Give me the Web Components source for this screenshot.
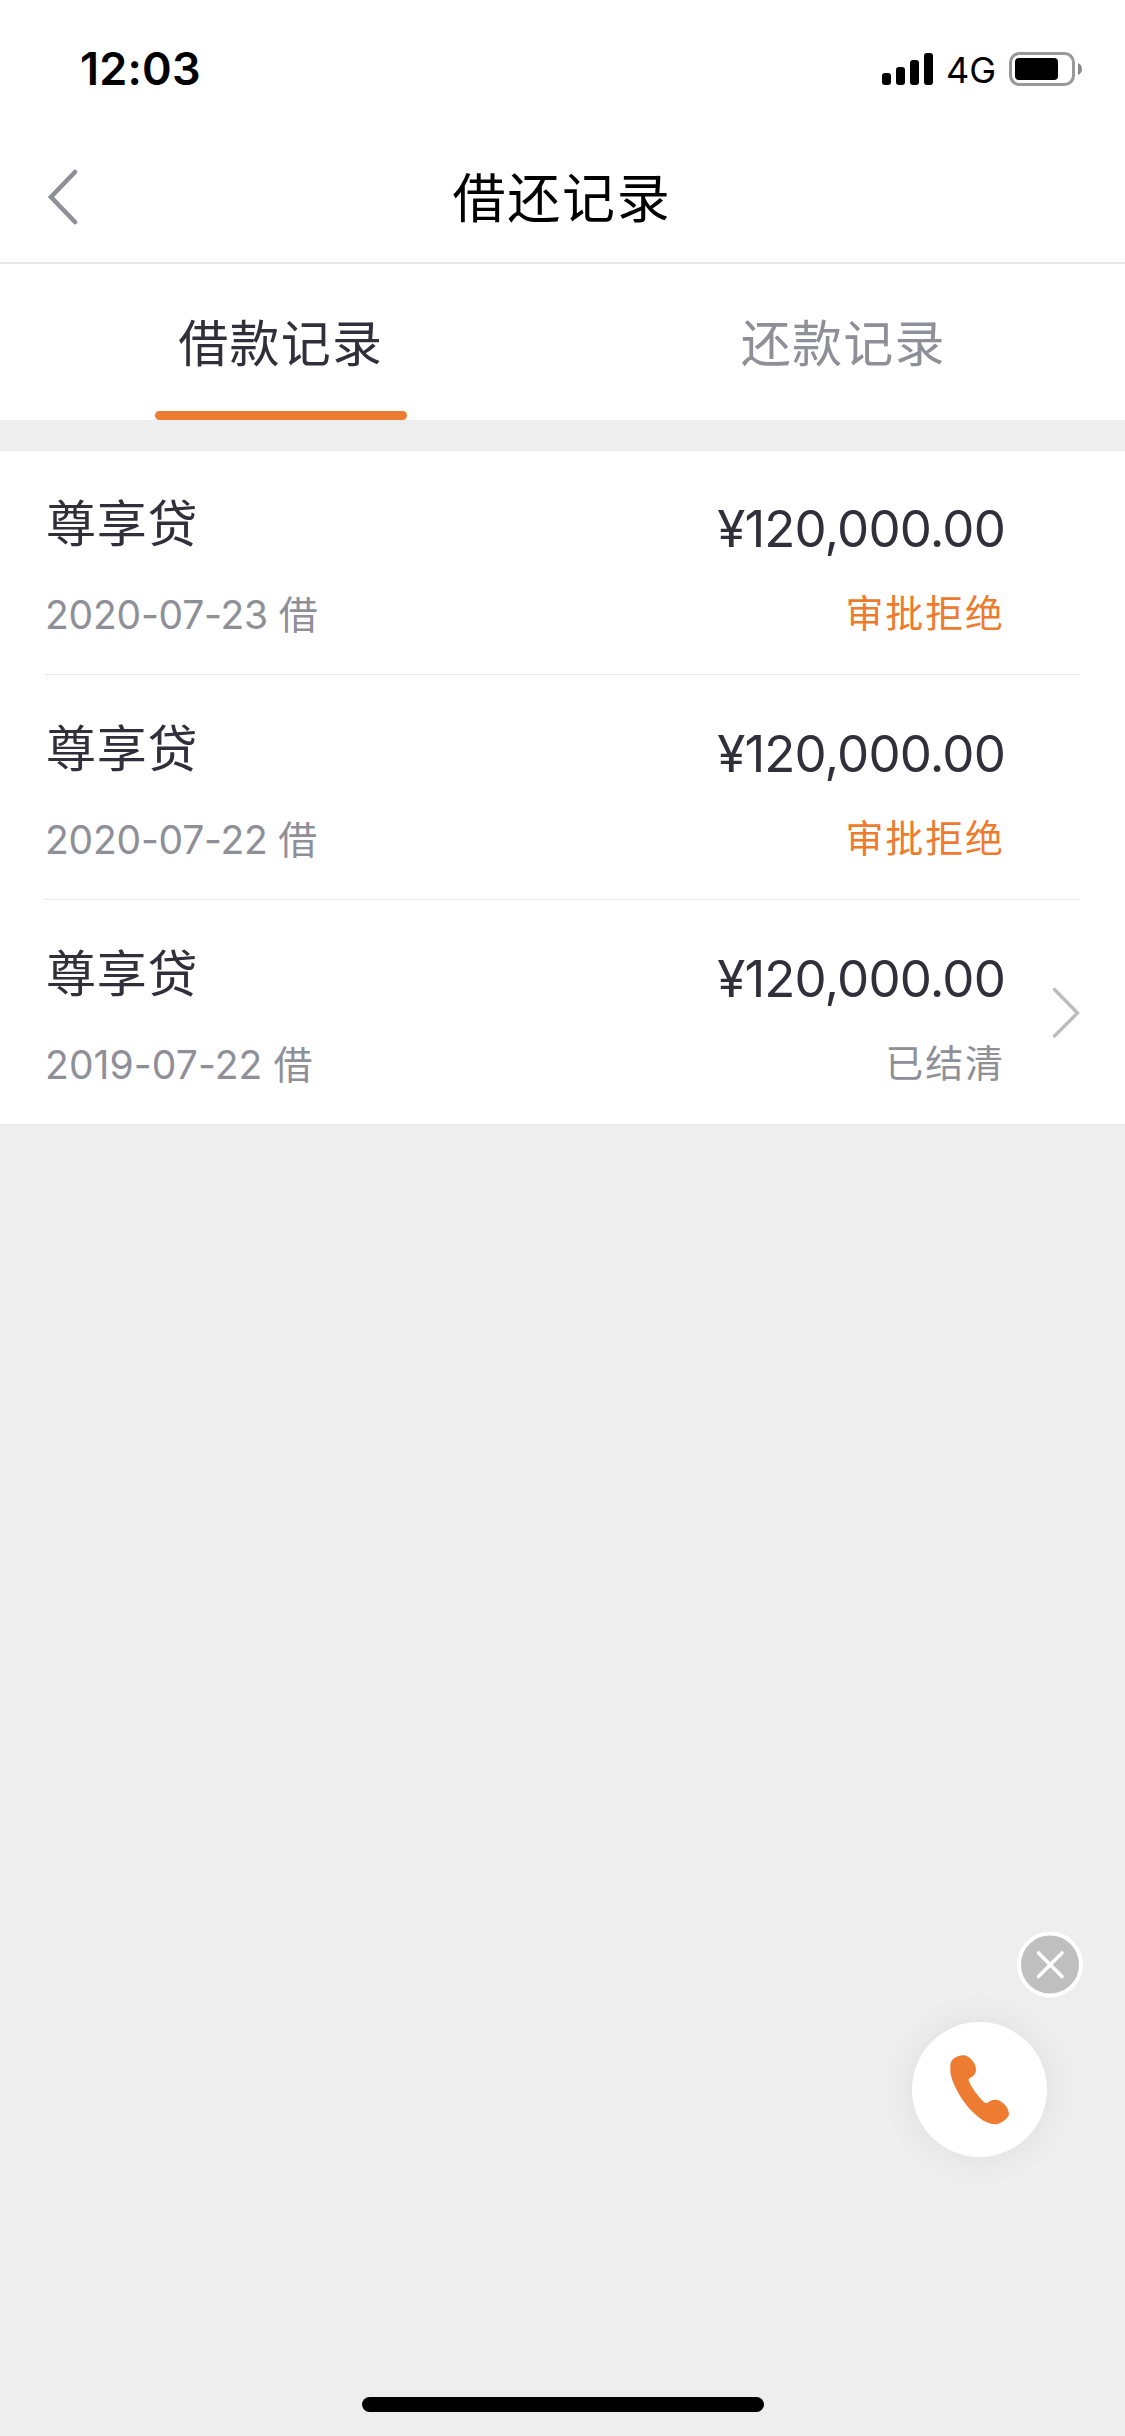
<!DOCTYPE html>
<html lang="zh-CN">
<head>
<meta charset="utf-8">
<title>借还记录</title>
<style>
html,body{margin:0;padding:0}
body{background:#eee;width:1125px;height:2436px;overflow:hidden;font-family:"Noto Sans CJK SC",Inter,sans-serif}
</style>
</head>
<body>
<loan-app></loan-app>
<script>
const define = (name, html) => customElements.define(name, class extends HTMLElement {
  constructor() {
    super();
    const t = document.createElement('template');
    t.innerHTML = html;
    this.attachShadow({ mode: 'open' }).append(t.content.cloneNode(true));
  }
});

define('status-bar', `
<style>
:host{display:flex;height:132px;box-sizing:border-box;padding:0 42px 0 80px;align-items:center;justify-content:space-between;color:#000;font-family:Inter,sans-serif}
.time{font-size:45px;font-weight:600;line-height:54px;padding-top:6px;letter-spacing:.2px}
.right{display:flex;align-items:center;padding-top:6px}
.net{font-size:36px;line-height:44px;margin:2px 13px 0 12px}
svg{display:block}
</style>
<div class="time">12:03</div>
<div class="right">
<svg width="52" height="34" viewBox="0 0 52 34"><rect x="0" y="21" width="9" height="12" rx="3"/><rect x="14" y="15" width="9" height="18" rx="3"/><rect x="28" y="8" width="9" height="25" rx="3"/><rect x="42" y="1" width="9" height="32" rx="3"/></svg>
<div class="net">4G</div>
<svg width="74" height="34" viewBox="0 0 74 34"><rect x="1.5" y="1.5" width="63" height="31" rx="9" fill="none" stroke="#999" stroke-width="3"/><rect x="6" y="6" width="43" height="22" rx="4"/><path d="M69 11q4 2 4 6t-4 6z" fill="#888"/></svg>
</div>`);

define('nav-bar', `
<style>
:host{display:grid;grid-template-columns:200px 1fr 200px;height:132px;box-sizing:border-box;border-bottom:2px solid #e7e7e7;align-items:center;color:#000}
.back{padding-left:47px}
svg{display:block}
.title{text-align:center;font-size:53px;line-height:80px;letter-spacing:1.8px;padding-bottom:5px;padding-right:1px}
</style>
<div class="back"><svg width="32" height="58" viewBox="0 0 32 58" fill="none" stroke="#8f8f98" stroke-width="4.6" stroke-linecap="round"><path d="M28 4 4 29 28 54"/></svg></div>
<div class="title"><slot></slot></div>`);

define('tab-item', `
<style>
:host{display:flex;flex:1;flex-direction:column;align-items:center;justify-content:space-between;color:#8f8f98;font-size:50px;line-height:74px;letter-spacing:1.2px}
:host([active]){color:#302f3a}
.label{padding:39px 1px 0 0}
.bar{width:252px;height:9px;border-radius:5px}
:host([active]) .bar{background:#ed7c32}
</style>
<div class="label"><slot></slot></div><div class="bar"></div>`);

define('tab-bar', `
<style>:host{display:flex;height:156px;background:#fff}</style><slot></slot>`);

define('record-row', `
<style>
:host{display:block;height:225px;padding:0 45px;box-sizing:border-box}
.in{display:flex;height:225px;box-sizing:border-box;border-bottom:1px solid #e7e7e7;padding-top:34px;align-items:flex-start}
:host([last]) .in{border-color:transparent}
.left{flex:1;display:flex;flex-direction:column;padding-left:1px}
.right{display:flex;flex-direction:column;align-items:flex-end}
.name{font-size:50px;line-height:72px;padding-bottom:2px;color:#302f3a;letter-spacing:.8px}
.date{font:39px/58px Inter,"Noto Sans CJK SC",sans-serif;color:#8f8f98;padding-top:28px;letter-spacing:-.22px;margin-left:-1px}
:host([settled]) .date{letter-spacing:.1px}
.amount{font:51px/62px Inter,sans-serif;color:#302f3a;padding-top:14px;letter-spacing:-.85px;margin-right:-1px}
.state{font-size:38px;line-height:58px;color:#ee7b2d;padding-top:22px;letter-spacing:1.9px;margin-right:-1px}
:host([settled]) .state{color:#8f8f98}
.arrow{width:76px;display:flex;justify-content:flex-end;padding-top:53px}
svg{display:block;visibility:hidden}
:host([settled]) svg{visibility:visible}
</style>
<div class="in">
<div class="left"><div class="name"><slot name="name"></slot></div><div class="date"><slot name="date"></slot></div></div>
<div class="right"><div class="amount"><slot name="amount"></slot></div><div class="state"><slot name="state"></slot></div></div>
<div class="arrow"><svg width="28" height="52" viewBox="0 0 28 52" fill="none" stroke="#bdbdbd" stroke-width="3.4" stroke-linecap="round"><path d="M2.5 2.5 25.500 26 2.5 49"/></svg></div>
</div>`);

define('call-widget', `
<style>
:host{position:absolute;left:912px;top:1932px;width:171px;height:225px;display:flex;flex-direction:column;justify-content:space-between}
.close{align-self:flex-end;width:66px;height:66px}
.call{width:135px;height:135px;border-radius:50%;background:#fff;box-shadow:0 0 34px rgba(0,0,0,.07)}
svg{display:block}
</style>
<div class="close"><svg width="66" height="66" viewBox="0 0 66 66"><circle cx="33" cy="32.5" r="31" fill="#bfbfbf" stroke="#fff" stroke-width="4"/><path d="M21.5 21 45 44.5M45 21 21.5 44.5" stroke="#fff" stroke-width="3.6" stroke-linecap="round"/></svg></div>
<div class="call"><svg width="135" height="135" viewBox="66 365 405 405"><path fill="#ed7c32" d="M181 494C181 477 202 465 220 465C240 465 258 490 258 508C258 522 246 530 237 535C234 538 237 543 239 547C248 566 265 588 281 604C285 608 288 610 292 607C298 603 306 598 316 598C334 598 357 620 357 641C357 652 333 672 315 672C293 672 270 656 252 639C212 600 181 541 181 509Z"/></svg></div>`);

define('home-bar', `
<style>:host{position:absolute;left:362px;top:2397px;width:402px;height:15px;border-radius:8px;background:#000}</style>`);

define('loan-app', `
<style>
:host{display:flex;flex-direction:column;width:1125px;height:2436px}
header{background:#fff}
.list{margin-top:30px;background:#fff;box-shadow:inset 0 1px #e6e6e6,inset 0 -1px #e6e6e6}
</style>
<header><status-bar></status-bar><nav-bar>借还记录</nav-bar></header>
<tab-bar><tab-item active>借款记录</tab-item><tab-item>还款记录</tab-item></tab-bar>
<div class="list">
<record-row><span slot="name">尊享贷</span><span slot="date">2020-07-23 借</span><span slot="amount">¥120,000.00</span><span slot="state">审批拒绝</span></record-row>
<record-row><span slot="name">尊享贷</span><span slot="date">2020-07-22 借</span><span slot="amount">¥120,000.00</span><span slot="state">审批拒绝</span></record-row>
<record-row settled last><span slot="name">尊享贷</span><span slot="date">2019-07-22 借</span><span slot="amount">¥120,000.00</span><span slot="state">已结清</span></record-row>
</div>
<call-widget></call-widget><home-bar></home-bar>`);
</script>
</body>
</html>
